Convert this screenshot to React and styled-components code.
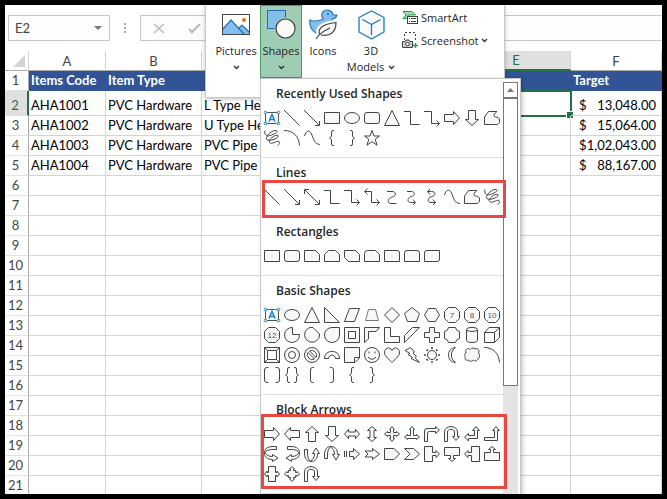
import React from "react";
import styled, { createGlobalStyle } from "styled-components";

const GlobalStyle = createGlobalStyle`
  * {
    box-sizing: border-box;
  }

  body {
    margin: 0;
    background: #000;
  }

  button,
  input {
    font: inherit;
    color: inherit;
    margin: 0;
    padding: 0;
    border: none;
    background: none;
  }
`;

const Frame = styled.main`
  position: relative;
  height: 100vh;
  border: 5px solid #000;
  background: #fff;
  overflow: hidden;
  font-family: "Open Sans", "Noto Sans", sans-serif;
  font-size: 11px;
  color: #262626;
`;

/* Formula bar */

const FormulaBar = styled.div`
  display: flex;
  align-items: center;
  height: 46px;
  padding-left: 3px;
  font-family: Lato, sans-serif;
  font-size: 13px;
  color: #444;
`;

const NameBox = styled.div`
  display: flex;
  align-items: center;
  width: 102px;
  height: 26px;
  padding: 0 6px;
  border: 1px solid #c6c6c6;
  background: #fdfdfd;
`;

const NameInput = styled.input`
  flex: 1;
  min-width: 0;
  outline: none;
`;

const NameToggle = styled.button`
  display: flex;
  width: 9px;
`;

const Grip = styled.svg`
  margin: 0 12px;
  flex: none;
`;

const FormulaBox = styled.div`
  display: flex;
  flex: 1;
  align-items: center;
  gap: 20px;
  height: 26px;
  padding-left: 12px;
  border: 1px solid #c6c6c6;
  border-right: none;
  background: #fdfdfd;
`;

const FormulaInput = styled.input`
  flex: 1;
  min-width: 0;
  outline: none;
`;

/* Worksheet */

const Sheet = styled.table`
  width: 100%;
  table-layout: fixed;
  border-collapse: separate;
  border-spacing: 0;
  font-family: Lato, sans-serif;
  font-size: 13px;
  line-height: 19px;
  color: #000;
`;

const Col = styled.col`
  width: ${({ $width }) => ($width ? `${$width}px` : "auto")};
`;

const Corner = styled.td`
  padding: 0 3px 3px 0;
  border-right: 1px solid #d4d4d4;
  border-bottom: 1px solid #ababab;
  vertical-align: bottom;

  svg {
    display: block;
    margin-left: auto;
  }
`;

const ColHead = styled.th`
  height: 20px;
  padding: 0;
  border-right: 1px solid #d4d4d4;
  border-bottom: ${({ $active }) => ($active ? "2px solid #217346" : "1px solid #ababab")};
  background: ${({ $active }) => ($active ? "#e0e0e0" : "#fff")};
  color: ${({ $active }) => ($active ? "#217346" : "#444")};
  font-weight: normal;
  line-height: 18px;
`;

const RowHead = styled.th`
  padding: 0 2px 0 0;
  border-right: ${({ $active }) => ($active ? "2px solid #217346" : "1px solid #ababab")};
  border-bottom: 1px solid #e4e4e4;
  background: ${({ $active }) => ($active ? "#e0e0e0" : "#fff")};
  color: ${({ $active }) => ($active ? "#217346" : "#444")};
  font-weight: normal;
  vertical-align: bottom;
`;

const Row = styled.tr`
  height: ${({ $tall }) => ($tall ? 25 : 20)}px;
`;

const Cell = styled.td`
  position: relative;
  padding: 0 2px;
  border-right: 1px solid #d4d4d4;
  border-bottom: 1px solid #d4d4d4;
  white-space: nowrap;
  vertical-align: bottom;
`;

const TitleCell = styled(Cell)`
  border-color: #305496;
  background: #305496;
  color: #fff;
  font-weight: bold;
`;

const Amount = styled.div`
  display: flex;
  justify-content: space-between;
  padding: 0 3px 0 6px;
`;

const Selection = styled.div`
  position: absolute;
  inset: -1px -2px -2px -1px;
  border: 2px solid #217346;

  &::after {
    content: "";
    position: absolute;
    right: -3px;
    bottom: -3px;
    width: 6px;
    height: 6px;
    border: solid #fff;
    border-width: 1px 0 0 1px;
    background: #217346;
  }
`;

/* Ribbon flyout */

const Ribbon = styled.div`
  position: absolute;
  top: 0;
  left: 200px;
  display: flex;
  align-items: flex-start;
  width: 300px;
  height: 93px;
  padding-left: 6px;
  border: solid #c8c8c8;
  border-width: 0 1px 1px;
  background: #fff;
  box-shadow: 0 1px 4px rgba(0, 0, 0, 0.25);
`;

const BigButton = styled.button`
  display: flex;
  flex-direction: column;
  align-items: center;
  flex: none;
  width: ${({ $width }) => $width}px;
  height: 73px;
  border: 1px solid ${({ $pressed }) => ($pressed ? "#4f9669" : "transparent")};
  background: ${({ $pressed }) => ($pressed ? "#9fcdb3" : "transparent")};
  line-height: 16px;
  white-space: nowrap;
`;

const Art = styled.span`
  display: flex;
  align-items: center;
  justify-content: center;
  height: 37px;
`;

const Line = styled.span`
  display: flex;
  align-items: center;
  gap: 4px;
  height: 16px;
`;

const SmallStack = styled.div`
  display: flex;
  flex-direction: column;
  gap: 7px;
  padding: 4px 0 0 4px;
`;

const SmallButton = styled.button`
  display: flex;
  align-items: center;
  gap: 3px;
  height: 16px;
  white-space: nowrap;
`;

/* Shapes menu */

const Menu = styled.div`
  position: absolute;
  top: 73px;
  left: 255px;
  display: flex;
  width: 261px;
  border: 1px solid #c6c6c6;
  background: #fff;
  box-shadow: 2px 1px 4px rgba(0, 0, 0, 0.2);
`;

const Gallery = styled.div`
  flex: 1;
  padding-left: 1px;
`;

const Section = styled.section`
  padding-bottom: 9px;
  border-bottom: 1px solid #dcdcdc;
`;

const Heading = styled.h2`
  margin: 0;
  padding-left: 14px;
  font-size: 12px;
  font-weight: 600;
  line-height: 29px;
`;

const ShapeGrid = styled.div`
  position: relative;
  display: grid;
  grid-template-columns: repeat(12, 20px);
  grid-auto-rows: 20px;
`;

const ShapeButton = styled.button`
  display: flex;
`;

const Highlight = styled.div`
  position: absolute;
  inset: ${({ $inset }) => $inset};
  border: 3px solid #e84840;
  pointer-events: none;
`;

const ScrollBar = styled.div`
  display: flex;
  flex-direction: column;
  flex: none;
  width: 15px;
  margin: 3px 2px 0 0;
  background: #e4e4e4;
`;

const ScrollUp = styled.button`
  display: flex;
  align-items: center;
  justify-content: center;
  height: 16px;
  border: 1px solid #777;
  background: #fff;
`;

const ScrollThumb = styled.div`
  height: 288px;
  border: 1px solid #777;
  background: #fff;
`;

const Chevron = () => (
  <svg width="7" height="5" viewBox="0 0 7 5" fill="none" stroke="#333" strokeWidth="1.4">
    <path d="M1 1L3.5 3.5L6 1" />
  </svg>
);

const PicturesArt = () => (
  <svg width="28" height="21" viewBox="0 0 28 21">
    <path d="M1 15L9 6L17 14L20 11L27 18V20H1Z" fill="#83beec" />
    <path d="M1 15L9 6L22 20M16 15L20 11L27 18" fill="none" stroke="#1e6fb8" strokeWidth="1.2" />
    <rect x="0.5" y="0.5" width="27" height="20" fill="none" stroke="#444" />
    <circle cx="22" cy="6" r="2" fill="#e3730f" />
  </svg>
);

const ShapesArt = () => (
  <svg width="29" height="29" viewBox="0 0 29 29">
    <rect x="0.5" y="0.5" width="18" height="18" fill="#83beec" stroke="#1e6fb8" />
    <circle cx="18.5" cy="18.5" r="11" fill="#9fcdb3" />
    <circle cx="18.5" cy="18.5" r="9.5" fill="#fafafa" stroke="#444" strokeWidth="1.2" />
  </svg>
);

const IconsArt = () => (
  <svg width="29" height="31" viewBox="0 0 29 31">
    <path
      d="M1 11C4 13 8 12 12 11C14 11 15 10 13 8C12 3 15 1 18 1C22 1 24 4 24 6H28C27 9 26 10 23 10C23 12 24 13 24 15L14 19L12 24H7C3 22 0 17 1 11Z"
      fill="#83beec"
      stroke="#1e6fb8"
      strokeWidth="1.1"
    />
    <circle cx="19" cy="5" r="1" fill="#1e5f9e" />
    <path d="M10 26C7 19 13 14 27 13C27 21 23 29 13 26" fill="#fafafa" stroke="#fff" strokeWidth="4" />
    <path
      d="M11 26C8 20 13 15 27 13.5C27 22 22 28 12 26M7 30C10 25 14 22 21 19"
      fill="#fafafa"
      stroke="#444"
      strokeWidth="1.2"
    />
  </svg>
);

const CubeArt = () => (
  <svg width="27" height="30" viewBox="0 0 27 30" strokeLinejoin="round">
    <path d="M13.5 1L26 7.5V22L13.5 29L1 22V7.5Z" fill="#fafafa" stroke="#1878c0" strokeWidth="1.3" />
    <path d="M4.5 9.5L13.5 14.5L22.5 9.5M13.5 14.5V25" fill="none" stroke="#1878c0" strokeWidth="1.3" />
  </svg>
);

const SmartArtArt = () => (
  <svg width="16" height="15" viewBox="0 0 16 15">
    <path d="M1 1.5H10L13.5 5H6V8.5H1L4 5Z" fill="#a5dcb5" stroke="#259a4b" />
    <rect x="5.5" y="6.5" width="10" height="7" fill="#fff" stroke="#444" />
    <path d="M7 8.5H8M9 8.5H14M7 11.5H8M9 11.5H14" stroke="#444" />
  </svg>
);

const ScreenshotArt = () => (
  <svg width="16" height="17" viewBox="0 0 16 17">
    <path d="M2.5 8V0.5H13.5V10" fill="none" stroke="#444" strokeDasharray="2 2" />
    <path d="M0.5 9.5H3L4 8H7L8 9.5H10.5V15.5H0.5Z" fill="#ccc" stroke="#444" />
    <circle cx="5.5" cy="12" r="1.8" fill="#fff" stroke="#444" />
    <path d="M11 13.5H16M13.5 11V16" stroke="#259a4b" strokeWidth="1.3" />
  </svg>
);

const TextBoxShape = () => (
  <g stroke="#1a86c8">
    <rect x="3.5" y="4.5" width="13" height="11" stroke="#555" />
    <path d="M7 13.5L10 6.5L13 13.5M8 11.5H12" fill="none" strokeWidth="1.5" />
    {[3.5, 16.5].map((x) =>
      [4.5, 15.5].map((y) => <circle key={`${x}-${y}`} cx={x} cy={y} r="1.3" fill="#fff" />)
    )}
  </g>
);

const NumberShape = ({ n }) => (
  <>
    <path d="M6.5 2.5H13.5L17.5 6.5V13.5L13.5 17.5H6.5L2.5 13.5V6.5Z" />
    <text
      x="10"
      y="13"
      fontSize="8"
      fontFamily="Liberation Sans, sans-serif"
      textAnchor="middle"
      fill="#555"
      stroke="none"
    >
      {n}
    </text>
  </>
);

const CurvedArrow = ({ transform }) => (
  <g transform={transform}>
    <path d="M14.5 2.5H11C5 2.5 2.5 5 2.5 9C2.5 13 5 15.5 10.5 15.5V17.5L16 14L10.5 10.5V12.5C6.5 12.5 4.5 11 3 8.5C4 6.5 7 5.5 11 5.5H14.5Z" />
  </g>
);

const CURVED_ARROWS = {
  "curved right arrow": undefined,
  "curved left arrow": "matrix(-1 0 0 1 20 0)",
  "curved up arrow": "matrix(0 -1 1 0 0 20)",
  "curved down arrow": "matrix(0 1 1 0 0 0)",
};

// Closed outlines, on a 20 x 20 cell
const CLOSED = {
  rectangle: "M2.5 4.5H17.5V15.5H2.5Z",
  oval: "M2.5 10A7.5 5.5 0 1 1 17.5 10A7.5 5.5 0 1 1 2.5 10Z",
  rounded: "M5 4.5H15Q17.5 4.5 17.5 7V13Q17.5 15.5 15 15.5H5Q2.5 15.5 2.5 13V7Q2.5 4.5 5 4.5Z",
  triangle: "M10 2.5L17.5 17.5H2.5Z",
  "right arrow": "M2.5 6.5H11.5V3.5L17.5 10L11.5 16.5V13.5H2.5Z",
  "left arrow": "M17.5 6.5H8.5V3.5L2.5 10L8.5 16.5V13.5H17.5Z",
  "up arrow": "M6.5 17.5V8.5H3.5L10 2.5L16.5 8.5H13.5V17.5Z",
  "down arrow": "M6.5 2.5V11.5H3.5L10 17.5L16.5 11.5H13.5V2.5Z",
  freeform: "M2.5 16.5V9L6.5 3.5H15C11.5 6 11 8.5 13.5 9C16 9 17.5 10 17.5 12V14.5L15.5 16.5Z",
  star: "M10 2.5L12 8H17.5L13.2 11.3L15 17.2L10 13.7L5 17.2L6.8 11.3L2.5 8H8Z",
  "snip one": "M2.5 4.5H13.5L17.5 8.5V15.5H2.5Z",
  "snip top": "M6.5 4.5H13.5L17.5 8.5V15.5H2.5V8.5Z",
  "snip diagonal": "M2.5 4.5H13.5L17.5 8.5V15.5H6.5L2.5 11.5Z",
  "snip and round": "M5.5 4.5H13.5L17.5 8.5V15.5H2.5V7.5Q2.5 4.5 5.5 4.5Z",
  "round one": "M2.5 4.5H15Q17.5 4.5 17.5 7V15.5H2.5Z",
  "round top": "M5 4.5H15Q17.5 4.5 17.5 7V15.5H2.5V7Q2.5 4.5 5 4.5Z",
  "round diagonal": "M5 4.5H17.5V13Q17.5 15.5 15 15.5H2.5V7Q2.5 4.5 5 4.5Z",
  "right triangle": "M2.5 2.5L17.5 17.5H2.5Z",
  parallelogram: "M7.5 3.5H17.5L12.5 16.5H2.5Z",
  diamond: "M10 2.5L17.5 10L10 17.5L2.5 10Z",
  pentagon: "M10 2.5L17.5 8.5L14.5 16.5H5.5L2.5 8.5Z",
  hexagon: "M6.5 3.5H13.5L17.5 10L13.5 16.5H6.5L2.5 10Z",
  pie: "M10.5 2.5A7.5 7.5 0 1 0 17.5 9.5H10.5Z",
  chord: "M8 2.5A7.5 7.5 0 1 0 17.5 11V9L11 2.5Z",
  teardrop: "M10 2.5H17.5V10A7.5 7.5 0 1 1 10 2.5Z",
  frame: "M2.5 2.5H17.5V17.5H2.5ZM6.5 6.5V13.5H13.5V6.5Z",
  "half frame": "M2.5 2.5H17.5L14 6.5H6.5V14L2.5 17.5Z",
  "l shape": "M2.5 2.5H8.5V11.5H17.5V17.5H2.5Z",
  "diagonal stripe": "M10.5 2.5H17.5L2.5 17.5V10.5Z",
  cross: "M7.5 2.5H12.5V7.5H17.5V12.5H12.5V17.5H7.5V12.5H2.5V7.5H7.5Z",
  plaque: "M6.5 2.5H13.5Q14 6 17.5 6.5V13.5Q14 14 13.5 17.5H6.5Q6 14 2.5 13.5V6.5Q6 6 6.5 2.5Z",
  can: "M4.5 4.5C4.5 1.8 15.5 1.8 15.5 4.5V15.5C15.5 18.2 4.5 18.2 4.5 15.5ZM4.5 4.5C4.5 7 15.5 7 15.5 4.5",
  cube: "M2.5 7.5L7 2.5H17.5V12.5L12.5 17.5H2.5ZM2.5 7.5H12.5V17.5M12.5 7.5L17.5 2.5",
  bevel:
    "M2.5 2.5H17.5V17.5H2.5ZM5.5 5.5H14.5V14.5H5.5ZM2.5 2.5L5.5 5.5M17.5 2.5L14.5 5.5M2.5 17.5L5.5 14.5M17.5 17.5L14.5 14.5",
  donut:
    "M2.5 10A7.5 7.5 0 1 1 17.5 10A7.5 7.5 0 1 1 2.5 10ZM6.5 10A3.5 3.5 0 1 0 13.5 10A3.5 3.5 0 1 0 6.5 10Z",
  "no symbol":
    "M2.5 10A7.5 7.5 0 1 1 17.5 10A7.5 7.5 0 1 1 2.5 10ZM7.5 6A4.8 4.8 0 0 1 14 12.5ZM6 7.5A4.8 4.8 0 0 0 12.5 14Z",
  "block arc": "M2.5 13.5C2.5 4 17.5 4 17.5 13.5H13.5C13 9 7 9 6.5 13.5Z",
  "folded corner": "M2.5 2.5H17.5V13L13 17.5H2.5ZM17.5 12.5H12.5V17.5",
  smiley: "M2.5 10A7.5 7.5 0 1 1 17.5 10A7.5 7.5 0 1 1 2.5 10ZM6 12Q10 16.5 14 12M7 6.5V8.5M13 6.5V8.5",
  heart: "M10 5.5C12 1 18 3 17.5 8C17 12 12.5 14.5 10 17.5C7.5 14.5 3 12 2.5 8C2 3 8 1 10 5.5Z",
  lightning: "M3 5.5L8.5 2.5L12.5 7L11 8L14.5 11.5L13 12.5L17.5 17.5L9 13.5L10.5 12.5L6 9.5L8 8.5Z",
  moon: "M13.5 2.5C4 3 4 17 13.5 17.5C8 14 8 6 13.5 2.5Z",
  cloud:
    "M4 8C2.5 3.5 7 2.5 8.5 4.5C10 2.5 12 2.5 13 4C16 2.5 18 5.5 16.5 8C18 10 18 13 16 13.5C15 17 12 16 11.5 15C9 17 7 16.5 6.5 15C3.5 16 2 13.5 3.5 11.5C2 10.5 2.5 8.5 4 8Z",
  "left right arrow": "M2.5 10L6.5 5.5V8H13.5V5.5L17.5 10L13.5 14.5V12H6.5V14.5Z",
  "up down arrow": "M10 2.5L14.5 6.5H12V13.5H14.5L10 17.5L5.5 13.5H8V6.5H5.5Z",
  "quad arrow":
    "M10 2.5L12.5 5.5H11.5V8.5H14.5V7.5L17.5 10L14.5 12.5V11.5H11.5V14.5H12.5L10 17.5L7.5 14.5H8.5V11.5H5.5V12.5L2.5 10L5.5 7.5V8.5H8.5V5.5H7.5Z",
  "three way arrow":
    "M10 2.5L12.5 5.5H11.5V11.5H14.5V10.5L17.5 13L14.5 15.5V14.5H5.5V15.5L2.5 13L5.5 10.5V11.5H8.5V5.5H7.5Z",
  "bent arrow": "M2.5 17.5V7Q2.5 4.5 5 4.5H13.5V2.5L17.5 6L13.5 9.5V7.5H7.5Q5.5 7.5 5.5 9.5V17.5Z",
  "u-turn arrow": "M2.5 17.5V8C2.5 0.8 15.5 0.8 15.5 8V12.5H17.5L14 16.5L10.5 12.5H12.5V8C12.5 4.5 5.5 4.5 5.5 8V17.5Z",
  "left up arrow": "M14 2.5L17.5 6.5H15.5V14.5H6.5V17L2.5 13L6.5 9.5V11.5H12.5V6.5H10.5Z",
  "bent up arrow": "M14 2.5L17.5 6.5H15.5V16.5H2.5V13.5H12.5V6.5H10.5Z",
  "striped arrow": "M7.5 7.5H11.5V4.5L17.5 10L11.5 15.5V12.5H7.5ZM2.5 7V13M4.5 7V13",
  "notched arrow": "M3 7H10.5V4.5L17.5 10L10.5 15.5V13H3L6 10Z",
  "arrow pentagon": "M2.5 4.5H12L17.5 10L12 15.5H2.5Z",
  chevron: "M2.5 4.5H11.5L17.5 10L11.5 15.5H2.5L8 10Z",
  "right callout": "M2.5 2.5H10.5V8.5H14V6.5L17.5 10L14 13.5V11.5H10.5V17.5H2.5Z",
  "down callout": "M2.5 3.5H17.5V11.5H11.5V14.5H13.5L10 17.5L6.5 14.5H8.5V11.5H2.5Z",
  "left callout": "M17.5 2.5H9.5V8.5H6V6.5L2.5 10L6 13.5V11.5H9.5V17.5H17.5Z",
  "up callout": "M2.5 16.5H17.5V8.5H11.5V5.5H13.5L10 2.5L6.5 5.5H8.5V8.5H2.5Z",
  "left right callout":
    "M6.5 2.5H13.5V8.5H15V7L17.5 10L15 13V11.5H13.5V17.5H6.5V11.5H5V13L2.5 10L5 7V8.5H6.5Z",
  "quad callout":
    "M10 2.5L12.5 5H11.5V6.5H13.5V8.5H15V7.5L17.5 10L15 12.5V11.5H13.5V13.5H11.5V15H12.5L10 17.5L7.5 15H8.5V13.5H6.5V11.5H5V12.5L2.5 10L5 7.5V8.5H6.5V6.5H8.5V5H7.5Z",
};

// Open strokes
const OPEN = {
  line: "M2 2L17.5 17.5",
  "line arrow": "M2 2L17 17M17.5 13V17.5H13",
  "double arrow": "M3 3L17 17M17.5 13V17.5H13M2.5 7V2.5H7",
  elbow: "M2 3.5H8.5V16.5H17.5",
  "elbow arrow": "M2 3.5H9.5V15.5H17M14.5 12.5L17.5 15.5L14.5 18.5",
  "elbow double arrow": "M3 4.5H9.5V15.5H17M14.5 12.5L17.5 15.5L14.5 18.5M5.5 1.5L2.5 4.5L5.5 7.5",
  "curved connector": "M5 4.5H10C14.5 4.5 14.5 9 10.5 10C5 11 5 16.5 9 16.5H14.5",
  "curved arrow": "M5 4.5H9C13.5 4.5 13.5 8.5 9.5 9.5C5 10.5 5 15.5 8.5 15.5H13M11 12.5L13.5 15.5L11 18",
  "curved double arrow":
    "M6 4.5H9.5C14 4.5 14 8.5 10 9.5C5 10.5 5 15.5 9 15.5H13.5M11 12.5L13.5 15.5L11 18M8 2L5.5 4.5L8 7.5",
  curve: "M2.5 8C4 2.5 7.5 1.5 9.5 6C12 12 12.5 16 18 16.5",
  scribble:
    "M3 2.5C2 6 4 9 8 7.5C13 6 17 3.5 14.5 2.5C11 1.5 4 7 4.5 11C6 14.5 18 10 16 7.5C13 6 5.5 12 7.5 14.5C10 17 14 12.5 17 13.5C18.5 15 17 16.5 15.5 17.5",
  arc: "M2 2.5C11 2.5 17 8 17.5 17.5",
  "left brace": "M12 2.5H11Q9.5 2.5 9.5 4V8.5L7.5 10L9.5 11.5V16Q9.5 17.5 11 17.5H12",
  "right brace": "M8 2.5H9Q10.5 2.5 10.5 4V8.5L12.5 10L10.5 11.5V16Q10.5 17.5 9 17.5H8",
  "bracket pair": "M6.5 2.5H5Q2.5 2.5 2.5 5V15Q2.5 17.5 5 17.5H6.5M13.5 2.5H15Q17.5 2.5 17.5 5V15Q17.5 17.5 15 17.5H13.5",
  "brace pair":
    "M8 2.5H7Q5.5 2.5 5.5 4V8.5L3.5 10L5.5 11.5V16Q5.5 17.5 7 17.5H8M12 2.5H13Q14.5 2.5 14.5 4V8.5L16.5 10L14.5 11.5V16Q14.5 17.5 13 17.5H12",
  "left bracket": "M12 2.5H10.5Q8.5 2.5 8.5 5V15Q8.5 17.5 10.5 17.5H12",
  "right bracket": "M8 2.5H9.5Q11.5 2.5 11.5 5V15Q11.5 17.5 9.5 17.5H8",
};

const renderShape = (name) => {
  if (name === "text box") return <TextBoxShape />;
  if (/^\d+$/.test(name)) return <NumberShape n={name} />;
  if (name in CURVED_ARROWS) return <CurvedArrow transform={CURVED_ARROWS[name]} />;
  if (name === "trapezoid") return <path d="M6.5 4.5H13.5L16.5 15.5H3.5Z" stroke="#777" />;
  if (name === "sun") {
    return (
      <>
        <circle cx="10" cy="10" r="4.5" />
        <path
          d="M9 3H11M9 17H11M3 9V11M17 9V11M4.5 6L6 4.5M14 4.5L15.5 6M4.5 14L6 15.5M15.5 14L14 15.5"
          strokeWidth="1.5"
        />
      </>
    );
  }
  if (OPEN[name]) return <path d={OPEN[name]} fill="none" />;
  return <path d={CLOSED[name]} fillRule="evenodd" />;
};

const SECTIONS = [
  {
    title: "Recently Used Shapes",
    shapes: [
      "text box", "line", "line arrow", "rectangle", "oval", "rounded", "triangle", "elbow", "elbow arrow",
      "right arrow", "down arrow", "freeform", "scribble", "arc", "curve", "left brace", "right brace", "star",
    ],
  },
  {
    title: "Lines",
    highlight: "-7px -3px -11px 0",
    shapes: [
      "line", "line arrow", "double arrow", "elbow", "elbow arrow", "elbow double arrow", "curved connector",
      "curved arrow", "curved double arrow", "curve", "freeform", "scribble",
    ],
  },
  {
    title: "Rectangles",
    shapes: [
      "rectangle", "rounded", "snip one", "snip top", "snip diagonal", "snip and round", "round one", "round top",
      "round diagonal",
    ],
  },
  {
    title: "Basic Shapes",
    shapes: [
      "text box", "oval", "triangle", "right triangle", "parallelogram", "trapezoid", "diamond", "pentagon",
      "hexagon", "7", "8", "10",
      "12", "pie", "chord", "teardrop", "frame", "half frame", "l shape", "diagonal stripe", "cross", "plaque",
      "can", "cube",
      "bevel", "donut", "no symbol", "block arc", "folded corner", "smiley", "heart", "lightning", "sun", "moon",
      "cloud", "arc",
      "bracket pair", "brace pair", "left bracket", "right bracket", "left brace", "right brace",
    ],
  },
  {
    title: "Block Arrows",
    highlight: "-10px -4px -5px -1px",
    shapes: [
      "right arrow", "left arrow", "up arrow", "down arrow", "left right arrow", "up down arrow", "quad arrow",
      "three way arrow", "bent arrow", "u-turn arrow", "left up arrow", "bent up arrow",
      "curved right arrow", "curved left arrow", "curved up arrow", "curved down arrow", "striped arrow",
      "notched arrow", "arrow pentagon", "chevron", "right callout", "down callout", "left callout", "up callout",
      "left right callout", "quad callout", "u-turn arrow",
    ],
  },
];

const COLUMNS = ["A", "B", "C", "D", "E", "F"];
const WIDTHS = [24, 77, 96, 150, 110, 109, null];

const ROWS = [
  ["Items Code", "Item Type", "", "", "", "Target"],
  ["AHA1001", "PVC Hardware", "L Type He", "", "", "13,048.00"],
  ["AHA1002", "PVC Hardware", "U Type He", "", "", "15,064.00"],
  ["AHA1003", "PVC Hardware", "PVC Pipe", "", "", "1,02,043.00"],
  ["AHA1004", "PVC Hardware", "PVC Pipe", "", "", "88,167.00"],
];

const ROW_COUNT = 21;

const Worksheet = () => (
  <Sheet>
    <colgroup>
      {WIDTHS.map((width, i) => (
        <Col key={i} $width={width} />
      ))}
    </colgroup>
    <thead>
      <tr>
        <Corner>
          <svg width="12" height="12" viewBox="0 0 12 12">
            <path d="M12 0V12H0Z" fill="#d4d4d4" />
          </svg>
        </Corner>
        {COLUMNS.map((name) => (
          <ColHead key={name} scope="col" $active={name === "E"}>
            {name}
          </ColHead>
        ))}
      </tr>
    </thead>
    <tbody>
      {Array.from({ length: ROW_COUNT }, (_, r) => {
        const CellType = r === 0 ? TitleCell : Cell;
        return (
          <Row key={r} $tall={r === 1}>
            <RowHead scope="row" $active={r === 1}>
              {r + 1}
            </RowHead>
            {COLUMNS.map((name, c) => {
              const value = ROWS[r]?.[c];
              return (
                <CellType key={name}>
                  {name === "F" && value && r > 0 ? (
                    <Amount>
                      <span>$</span>
                      <span>{value}</span>
                    </Amount>
                  ) : (
                    value
                  )}
                  {name === "E" && r === 1 && <Selection />}
                </CellType>
              );
            })}
          </Row>
        );
      })}
    </tbody>
  </Sheet>
);

const ShapesMenu = () => (
  <Menu>
    <Gallery>
      {SECTIONS.map(({ title, shapes, highlight }) => (
        <Section key={title}>
          <Heading>{title}</Heading>
          <ShapeGrid>
            {shapes.map((name, i) => (
              <ShapeButton key={i} aria-label={name}>
                <svg width="20" height="20" viewBox="0 0 20 20" fill="#f8f8f8" stroke="#444">
                  {renderShape(name)}
                </svg>
              </ShapeButton>
            ))}
            {highlight && <Highlight $inset={highlight} />}
          </ShapeGrid>
        </Section>
      ))}
    </Gallery>
    <ScrollBar>
      <ScrollUp aria-label="Scroll up">
        <svg width="7" height="4" viewBox="0 0 7 4">
          <path d="M0 4L3.5 0L7 4Z" fill="#777" />
        </svg>
      </ScrollUp>
      <ScrollThumb />
    </ScrollBar>
  </Menu>
);

const App = () => {
  return (
    <>
      <GlobalStyle />
      <Frame>
        <FormulaBar>
          <NameBox>
            <NameInput aria-label="Name box" defaultValue="E2" />
            <NameToggle aria-label="Show names">
              <svg width="8" height="4" viewBox="0 0 8 4">
                <path d="M0 0H8L4 4Z" fill="#777" />
              </svg>
            </NameToggle>
          </NameBox>
          <Grip width="6" height="12" viewBox="0 0 6 12" fill="#aaa">
            <path d="M2 1H4V3H2ZM2 5H4V7H2ZM2 9H4V11H2Z" />
          </Grip>
          <FormulaBox>
            <svg width="12" height="11" viewBox="0 0 12 11" fill="none" stroke="#bcbcbc" strokeWidth="1.6">
              <path d="M1 1L11 10M11 1L1 10" />
            </svg>
            <svg width="16" height="11" viewBox="0 0 16 11" fill="none" stroke="#bcbcbc" strokeWidth="2.4">
              <path d="M4 6L7 9L15 1" />
            </svg>
            <FormulaInput aria-label="Formula" />
          </FormulaBox>
        </FormulaBar>

        <Worksheet />

        <Ribbon>
          <BigButton $width={48}>
            <Art><PicturesArt /></Art>
            <Line>Pictures</Line>
            <Line><Chevron /></Line>
          </BigButton>
          <BigButton $width={42} $pressed>
            <Art><ShapesArt /></Art>
            <Line>Shapes</Line>
            <Line><Chevron /></Line>
          </BigButton>
          <BigButton $width={42}>
            <Art><IconsArt /></Art>
            <Line>Icons</Line>
          </BigButton>
          <BigButton $width={54}>
            <Art><CubeArt /></Art>
            <Line>3D</Line>
            <Line>Models <Chevron /></Line>
          </BigButton>
          <SmallStack>
            <SmallButton><SmartArtArt />SmartArt</SmallButton>
            <SmallButton><ScreenshotArt />Screenshot <Chevron /></SmallButton>
          </SmallStack>
        </Ribbon>

        <ShapesMenu />
      </Frame>
    </>
  );
};

export default App;
